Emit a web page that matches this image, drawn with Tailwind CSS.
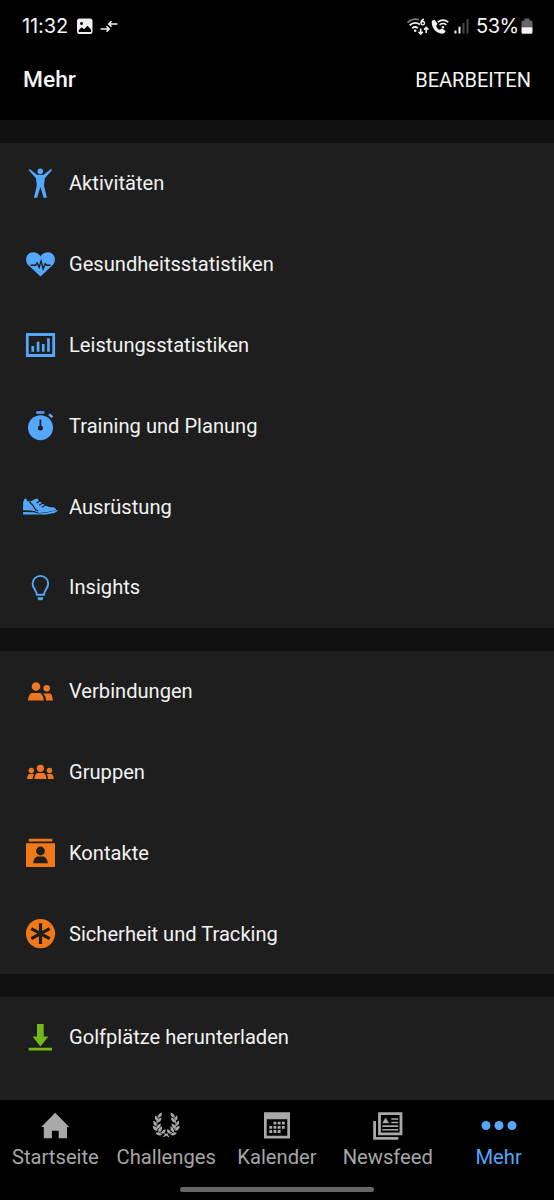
<!DOCTYPE html>
<html lang="de">
<head>
<meta charset="utf-8">
<meta name="viewport" content="width=device-width">
<title>Mehr</title>
<script src="https://cdn.jsdelivr.net/npm/@tailwindcss/browser@4"></script>
</head>
<body class="bg-black">
<div class="relative flex h-[1200px] w-[554px] flex-col overflow-hidden bg-black font-[Roboto,sans-serif] text-[#f4f4f4]">
  <header class="h-[120px] shrink-0">
    <div class="flex h-[53px] items-center justify-between pl-[22px] pr-[20px]">
      <div class="flex items-center">
        <span class="-mt-[2px] w-[54px] whitespace-nowrap font-[Inter,sans-serif] text-[20px] leading-6 tracking-[-0.1px]">11:32</span>
        <svg class="h-[20px] w-[42px]" viewBox="0 0 42 20" fill="#f0f0f0"><path fill-rule="evenodd" d="M3.500 1.500H14A2.500 2.500 0 0 1 16.500 4V14.500A2.500 2.500 0 0 1 14 17H3.500A2.500 2.500 0 0 1 1 14.500V4A2.500 2.500 0 0 1 3.500 1.500ZM2.700 15H15v-2.500L11.500 8.800 8 12.300 5.700 10.300 2.700 13.300ZM5.500 5a1.500 1.500 0 1 0 .01 0Z"/><path d="M24.500 12h8.500M33 7h8.500M30.500 9.300l2.700 2.700-2.700 2.700M35.500 4.300 32.800 7l2.700 2.700" fill="none" stroke="#f0f0f0" stroke-width="1.600"/></svg>
      </div>
      <div class="flex items-center">
        <svg class="h-[20px] w-[64px]" viewBox="0 0 64 20" fill="none" stroke="#f0f0f0">
          <path d="M.5 5.500Q6 .5 12 2.700" stroke="#777" stroke-width="1.700"/><path d="M2.700 8.200Q7.500 4 13 7.500M5.200 11.100q3-2.300 5.700 0" stroke-width="1.800"/><circle cx="8.200" cy="13.800" r="1.300" fill="#f0f0f0" stroke="none"/>
          <path d="M17 2.300q-2.900.5-2.900 3.900M13.700 11.500V17M11.500 14.800 13.700 17l2.200-2.200M19.200 16v-5.500M17 12.600l2.200-2.200 2.200 2.200" stroke-width="1.600"/><circle cx="15.800" cy="6.200" r="1.700" stroke-width="1.400"/>
          <path d="M27.500 2.700c-2 0-2.800 1.300-2.800 3 .3 5.500 4.600 10.500 10.200 11 2 0 3.400-.8 3.600-2.900L34.900 11.400l-2.500 1.400c-1.700-.9-2.600-2.100-3.200-3.900l1.300-2.200Z" fill="#f0f0f0" stroke="none"/><path d="M30.700 5.200q5.300-4.200 10.600 0M32.600 7.800q3.400-2.600 6.800 0" stroke-width="1.600"/><circle cx="36" cy="10.200" r="1.200" fill="#f0f0f0" stroke="none"/>
          <path d="M48.500 13.500v3M52.500 9.700v6.800" stroke-width="2"/><path d="M56.500 6v10.500M60.500 2v14.500" stroke="#484848" stroke-width="2"/>
        </svg>
        <span class="-mt-[2px] ml-[5px] w-[45px] whitespace-nowrap font-[Inter,sans-serif] text-[20px] leading-6 tracking-[-0.5px]">53%</span>
        <svg class="mr-[1px] h-[20px] w-[12px]" viewBox="0 0 12 20"><path d="M3.500 1.500h5v2H10a1.500 1.500 0 0 1 1.500 1.500v5.500H.5V5A1.500 1.500 0 0 1 2 3.500h1.500Z" fill="#666"/><path d="M.5 10.300h11v5a1.500 1.500 0 0 1-1.500 1.500H2A1.500 1.500 0 0 1 .5 15.300Z" fill="#f4f4f4"/></svg>
      </div>
    </div>
    <div class="flex h-[53px] items-center justify-between px-[23px]">
      <h1 class="mt-[2px] text-[22.8px] font-medium">Mehr</h1>
      <span class="text-[20px]">BEARBEITEN</span>
    </div>
  </header>

  <main class="flex h-[980px] shrink-0 flex-col overflow-hidden bg-[#111111] text-[20.13px]">
    <section class="mt-[23px] flex h-[485px] shrink-0 flex-col bg-[#1e1e1e] text-[#f2f2f2]">
      <div class="flex flex-1 items-center pl-5"><svg class="mr-[9px] h-10 w-10" viewBox="0 0 40 40" fill="#54a7fa"><circle cx="20.300" cy="8.300" r="2.800"/><path d="m8.500 7.100 1.100-1.100 7.400 5.800h6.600L31 6l1.100 1.100-7.300 8.200-.8 7.400 2.900 12h-3.300L20.400 24l-3.200 10.700h-3.300l2.900-12-.8-7.400Z"/></svg><span>Aktivitäten</span></div>
      <div class="flex flex-1 items-center pl-5"><svg class="mr-[9px] h-10 w-10" viewBox="0 0 40 40"><path fill="#54a7fa" d="M20.500 32.600 9 21.800C3.500 16.500 6.200 8.500 13.200 8.300c3.200 0 5.700 1.400 7.300 4.200 1.600-2.800 4.100-4.200 7.300-4.200 7 .2 9.700 8.200 4.200 13.500Z"/><path d="M10.500 21.300h5l1.600-2.300 2 4.300 2-6.300 2 8 2-5.200 1.500 1.500h3.900" fill="none" stroke="#1e1e1e" stroke-width="1.400"/></svg><span>Gesundheitsstatistiken</span></div>
      <div class="flex flex-1 items-center pl-5"><svg class="mr-[9px] h-10 w-10" viewBox="0 0 40 40"><path d="M7.300 9.500h26.400v21H7.300Z" fill="none" stroke="#54a7fa" stroke-width="2.800"/><path fill="#54a7fa" d="M11.400 21H14.100v5.700h-2.700ZM16.700 16.700h2.700v10h-2.700ZM21.900 19h2.700v7.700h-2.700ZM27.100 13.300h2.700v13.400h-2.700Z"/></svg><span>Leistungsstatistiken</span></div>
      <div class="flex flex-1 items-center pl-5"><svg class="mr-[9px] h-10 w-10" viewBox="0 0 40 40"><circle cx="20.500" cy="21.700" r="12.500" fill="#54a7fa"/><path d="M16.300 6.500h8M29 8.200l3.500 3" fill="none" stroke="#54a7fa" stroke-width="2.500"/><path d="M20.400 13.500v8" stroke="#1e1e1e" stroke-width="1.700"/><circle cx="20.400" cy="21.900" r="2.500" fill="#1e1e1e"/></svg><span>Training und Planung</span></div>
      <div class="flex flex-1 items-center pl-5"><svg class="mr-[9px] h-10 w-10" viewBox="0 0 40 40"><path fill="#54a7fa" d="M3.100 23.200V15.200l1.500-3.500 1.300-.2 1.600 2.800 3.100.1 5-2.700 2-.2 1 1.900 3.700 2.900 3 2.200 3.900 1.400 5 .7 2 1.600-.6 1-8.200 1.900-8 .8-4.400-1.700-4-.6Z"/><path d="m9.500 15 3.300 3.300 2.900 4.500 2.400 1M16.500 16l3.700-2.300M19.200 18.200l3.700-2.300M21.900 20.300l3.700-2.300" fill="none" stroke="#1e1e1e" stroke-width="1.200"/><path fill="#54a7fa" d="M3.100 24.900 14 25.200 18.500 26.400l9-.8 9.700-2.500.7.700-3.400 2.200-8.900 1.600H3.100Z"/></svg><span>Ausrüstung</span></div>
      <div class="flex flex-1 items-center pl-5"><svg class="mr-[9px] h-10 w-10" viewBox="0 0 40 40"><path d="M16.800 26.700c0-4-4.200-6.400-4.200-11a7.800 7.800 0 0 1 15.600 0c0 4.600-4.200 7-4.200 11Z" fill="none" stroke="#54a7fa" stroke-width="1.900"/><path d="M17.700 29.300h5.400v1.500l-1 1.400h-3.400l-1-1.400Z" fill="#54a7fa"/></svg><span class="-mt-px">Insights</span></div>
    </section>
    <section class="mt-[23px] flex h-[323px] shrink-0 flex-col bg-[#1e1e1e] text-[#f2f2f2]">
      <div class="flex flex-1 items-center pl-5"><svg class="mr-[9px] h-10 w-10" viewBox="0 0 40 40" fill="#ed7722"><circle cx="16" cy="15.500" r="4.300"/><circle cx="26.700" cy="17.200" r="3.300"/><path d="M8 29.500c.4-3.500 1.300-6.300 3.300-7.600h9c2 1.300 3 4.100 3.600 7.600ZM23.200 22.400h7.200c1.700 1.500 2.200 4.200 2.500 7.100h-6.600c-.5-3-1.300-5.300-3.100-7.100Z"/></svg><span>Verbindungen</span></div>
      <div class="flex flex-1 items-center pl-5"><svg class="mr-[9px] h-10 w-10" viewBox="0 0 40 40" fill="#ed7722"><circle cx="20.400" cy="16.300" r="3.600"/><circle cx="11.300" cy="18.500" r="2.700"/><circle cx="29.500" cy="18.500" r="2.700"/><path d="M14.300 27c.3-2.900 1-4.700 2.500-6h7.200c1.500 1.300 2.200 3.100 2.500 6ZM7 27c.2-2.300.7-3.900 2-5h5.200c-.9 1.300-1.300 3-1.500 5ZM33.800 27c-.2-2.300-.7-3.900-2-5h-5.200c.9 1.300 1.300 3 1.500 5Z"/></svg><span>Gruppen</span></div>
      <div class="flex flex-1 items-center pl-5"><svg class="mr-[9px] h-10 w-10" viewBox="0 0 40 40"><path fill="#f07819" d="M8.700 5.700h23.600v2.700H8.700ZM6 10.200h29V34H6Z"/><circle cx="20.500" cy="18" r="4.400" fill="#1e1e1e"/><path d="M13.200 30.300c.2-3.500 1.600-6 4-6.900h6.500c2.400.9 3.800 3.400 4 6.900Z" fill="#1e1e1e"/></svg><span>Kontakte</span></div>
      <div class="flex flex-1 items-center pl-5"><svg class="mr-[9px] h-10 w-10" viewBox="0 0 40 40"><circle cx="20.500" cy="19.600" r="14.600" fill="#f07819"/><path d="M20.500 9.300v20.600M11.300 14.600l18.400 10M29.700 14.600l-18.400 10" stroke="#1e1e1e" stroke-width="3.200"/></svg><span>Sicherheit und Tracking</span></div>
    </section>
    <section class="mt-[23px] flex h-[103px] shrink-0 flex-col bg-[#1e1e1e] text-[#f2f2f2]">
      <div class="flex h-[80px] items-center pl-5"><svg class="mr-[9px] h-10 w-10" viewBox="0 0 40 40" fill="#73b917"><path d="M17 7h6.700v12.600h4.700L20.400 29.600l-7.900-10H17ZM8.700 30.700H32v2.700H8.700Z"/></svg><span>Golfplätze herunterladen</span></div>
    </section>
  </main>

  <nav class="grid h-[100px] shrink-0 grid-cols-5 bg-black text-center text-[20.2px] leading-6 text-[#a6a6a6]">
    <div class="flex flex-col items-center pt-[10px]"><svg class="h-8 w-9" viewBox="0 0 36 32" fill="#a9a9a9"><path d="M18.200 2.800 32.200 17H30v11.200h-8.300v-7.500h-6.800v7.500H6.800V17H4.200Z"/></svg><span class="mt-[3px]">Startseite</span></div>
    <div class="flex flex-col items-center pt-[10px]"><svg class="h-8 w-9" viewBox="0 0 36 32" fill="#a9a9a9">
      <defs><g id="branch"><path d="M9.300 8C6.300 14 8 21.500 14 24" fill="none" stroke="#a9a9a9" stroke-width="1"/><path d="M8.800 8Q8.800 3.700 13.500 2.500q.2 4.800-4.700 5.500ZM7.800 11Q4.800 9 6.600 5.200q3.300 2.400 1.200 5.800ZM8 13q.6-4.500 4.900-5.300.3 4.900-4.900 5.300ZM7.300 16.600q-3.800-1.300-3-5.600 4.100 1.100 3 5.600ZM7.600 19.200q.5-4.300 4.600-5.300.4 5-4.600 5.300ZM8.600 21.400q-4.800-.2-5.100-5 5.100 0 5.100 5ZM9.700 23q-.2-4.700 3.700-6.400 1.300 5-3.700 6.400ZM13.700 25.700q-4.800 2-7.200-2.100 4.600-2.200 7.200 2.100ZM13.100 24.600q0-4.300 4.300-4.800.3 4.500-4.300 4.800ZM14.800 27.300 15.500 28.100 20.500 24.700 19.600 24Q16.500 24.600 14.800 27.300Z"/></g></defs>
      <g transform="translate(1.400 .2) scale(.93 .96)"><use href="#branch"/><use href="#branch" transform="matrix(-1 0 0 1 36.200 0)"/></g></svg><span class="mt-[3px]">Challenges</span></div>
    <div class="flex flex-col items-center pt-[10px]"><svg class="h-8 w-9" viewBox="0 0 36 32" fill="#a9a9a9"><path fill-rule="evenodd" d="M5 2.200h26v26.300H5ZM7.700 9.300v16.500h20.600V9.300Z"/><path d="M14.500 11.700h2.900v2.900h-2.900ZM18.700 11.700h2.900v2.900h-2.900ZM22.900 11.700h2.900v2.900h-2.900ZM10.300 15.900h2.900v2.900h-2.900ZM14.500 15.900h2.900v2.900h-2.900ZM18.700 15.900h2.900v2.900h-2.900ZM22.900 15.900h2.900v2.900h-2.900ZM10.300 20.100h2.900V23h-2.900ZM14.500 20.100h2.900V23h-2.900ZM18.700 20.100h2.900V23h-2.900Z"/></svg><span class="mt-[3px]">Kalender</span></div>
    <div class="flex flex-col items-center pt-[10px]"><svg class="h-8 w-9" viewBox="0 0 36 32"><path d="M9.500 3.700h21.500v20.200H9.500ZM4.600 11v17.400h23.700" fill="none" stroke="#a9a9a9" stroke-width="2.800"/><path d="m12.300 13.200 3.300-5.700 3.400 5.700Z" fill="#a9a9a9"/><path d="M21.300 9h6.900M21.300 12.500h6.900M12.300 16.100h15.900M12.300 19.700h15.900" stroke="#a9a9a9" stroke-width="1.600"/></svg><span class="mt-[3px]">Newsfeed</span></div>
    <div class="flex flex-col items-center pt-[10px] text-[#54a7fa]"><svg class="h-8 w-9" viewBox="0 0 36 32" fill="#54a7fa"><circle cx="5" cy="15.500" r="4.500"/><circle cx="18" cy="15.500" r="4.500"/><circle cx="31" cy="15.500" r="4.500"/></svg><span class="mt-[3px]">Mehr</span></div>
  </nav>
  <div class="absolute left-[180px] top-[1187px] h-[5px] w-[194px] rounded-full bg-[#666666]"></div>
</div>
</body>
</html>
